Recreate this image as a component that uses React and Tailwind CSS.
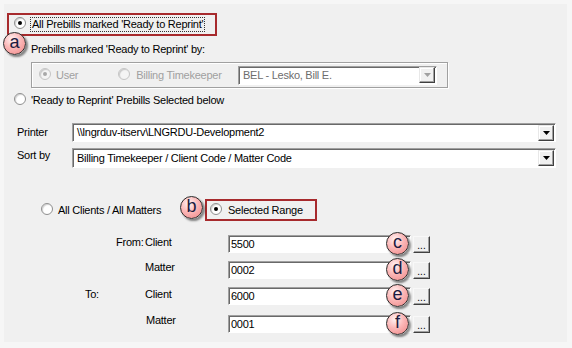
import React from 'react';

const Radio = ({ checked, disabled }) => (
  <span
    className={`relative inline-block shrink-0 w-[12px] h-[12px] rounded-full border ${
      disabled ? 'border-[#c4c4c4] bg-[#f4f4f4]' : 'border-[#8f8f8f] bg-white'
    } shadow-[inset_1px_1px_1px_rgba(0,0,0,0.18)]`}
  >
    {checked && (
      <span
        className={`absolute left-[3px] top-[3px] w-[4px] h-[4px] rounded-full ${
          disabled ? 'bg-[#a8a8a8]' : 'bg-black'
        }`}
      />
    )}
  </span>
);

const Badge = ({ letter, className }) => (
  <div
    className={`absolute w-[23px] h-[23px] rounded-full border-[1.5px] border-[#2a2a2a] bg-[radial-gradient(circle_at_38%_30%,#fff3f3_0%,#fbb7b7_45%,#ee8585_100%)] shadow-[2px_2px_2px_rgba(0,0,0,0.45)] flex items-center justify-center tracking-normal ${className}`}
  >
    <span className="text-[18px] leading-none text-[#1b1b40] font-['Liberation_Sans'] -mt-[3px]">{letter}</span>
  </div>
);

const DropButton = ({ disabled }) => (
  <div className="w-[16px] h-[16px] bg-[#f0f0f0] border border-t-[#e8e8e8] border-l-[#e8e8e8] border-b-[#404040] border-r-[#404040] shadow-[inset_-1px_-1px_0_#a0a0a0,inset_1px_1px_0_#fff] flex items-center justify-center">
    <svg width="7" height="4" viewBox="0 0 7 4">
      <path d="M0 0h7L3.5 4z" fill={disabled ? '#a0a0a0' : '#000'} />
    </svg>
  </div>
);

const Combo = ({ value, width, height, disabled }) => (
  <div
    className={`flex items-center justify-between bg-white border border-t-[#a0a0a0] border-l-[#a0a0a0] border-b-white border-r-white shadow-[inset_1px_1px_0_#696969] pl-[4px] pr-[1px] ${
      disabled ? 'text-[#6d6d6d]' : 'text-black'
    }`}
    style={{ width, height }}
  >
    <span className="whitespace-nowrap">{value}</span>
    <DropButton disabled={disabled} />
  </div>
);

const RangeRow = ({ label, value, badge, mt }) => (
  <div className={`flex items-center h-[18px] ${mt}`}>
    <div className="w-[221px] h-[18px] relative">{label}</div>
    <div className="relative w-[183px] h-[18px] bg-white border border-t-[#a0a0a0] border-l-[#a0a0a0] border-b-white border-r-white shadow-[inset_1px_1px_0_#696969] pl-[2px] flex items-center">
      {value}
      <Badge letter={badge} className="left-[157px] -top-[4px]" />
    </div>
    <div className="ml-[2px] w-[17px] h-[17px] bg-[#f0f0f0] border border-t-[#f8f8f8] border-l-[#f8f8f8] border-b-[#404040] border-r-[#404040] shadow-[inset_-1px_-1px_0_#a0a0a0] flex items-end justify-center pb-[1px] text-[10px] leading-none tracking-normal">
      ...
    </div>
  </div>
);

export default function App() {
  return (
    <div className="w-[572px] h-[348px] bg-[#f6f6f6] pt-[4px] pl-[4px] font-['Liberation_Sans',Arial,sans-serif] text-[11px] leading-[13px] tracking-[-0.25px] text-black">
      <div className="relative w-[563px] h-[338px] bg-[#f0f0f0] pt-[9px] pl-[3px]">
        {/* option a */}
        <div className="w-[210px] h-[23px] border-2 border-[#a72a2d] flex items-center">
          <div className="ml-[5px]">
            <Radio checked />
          </div>
          <span className="ml-[4px] border border-dotted border-[#333] px-[1px] whitespace-nowrap">
            All Prebills marked 'Ready to Reprint'
          </span>
        </div>
        <Badge letter="a" className="-left-[1px] top-[28px]" />

        <div className="ml-[24px] mt-[7px]">Prebills marked 'Ready to Reprint' by:</div>

        <div className="ml-[24px] mt-[6px] w-[417px] h-[26px] border border-[#a0a0a0] shadow-[1px_1px_0_#fff,inset_1px_1px_0_#fff] flex items-center text-[#a0a0a0]">
          <div className="ml-[7px]">
            <Radio checked disabled />
          </div>
          <span className="ml-[5px]">User</span>
          <div className="ml-[40px]">
            <Radio disabled />
          </div>
          <span className="ml-[6px]">Billing Timekeeper</span>
          <div className="ml-auto mr-[10px]">
            <Combo value="BEL - Lesko, Bill E." width={199} height={19} disabled />
          </div>
        </div>

        <div className="flex items-center mt-[5px]">
          <div className="ml-[7px]">
            <Radio />
          </div>
          <span className="ml-[5px]">'Ready to Reprint' Prebills Selected below</span>
        </div>

        {/* printer / sort */}
        <div className="flex items-center mt-[15px]">
          <span className="ml-[10px] w-[55px]">Printer</span>
          <Combo value={'\\\\lngrduv-itserv\\LNGRDU-Development2'} width={484} height={19} />
        </div>
        <div className="flex items-start mt-[6px]">
          <span className="ml-[10px] w-[55px] pt-[1px]">Sort by</span>
          <Combo value="Billing Timekeeper / Client Code / Matter Code" width={484} height={20} />
        </div>

        {/* range selection */}
        <div className="flex items-center mt-[31px] h-[22px]">
          <div className="ml-[34px]">
            <Radio />
          </div>
          <span className="ml-[5px] w-[102px] whitespace-nowrap">All Clients / All Matters</span>
          <div className="ml-[45px] w-[112px] h-[22px] border-2 border-[#a72a2d] flex items-center">
            <div className="ml-[3px]">
              <Radio checked />
            </div>
            <span className="ml-[6px]">Selected Range</span>
          </div>
        </div>
        <Badge letter="b" className="left-[176px] top-[192px]" />

        <RangeRow
          mt="mt-[14px]"
          label={
            <>
              <span className="absolute left-[109px] top-[1px]">From:</span>
              <span className="absolute left-[138px] top-[1px]">Client</span>
            </>
          }
          value="5500"
          badge="c"
        />
        <RangeRow
          mt="mt-[8px]"
          label={<span className="absolute left-[138px] top-[0px]">Matter</span>}
          value="0002"
          badge="d"
        />
        <RangeRow
          mt="mt-[8px]"
          label={
            <>
              <span className="absolute left-[78px] top-[1px]">To:</span>
              <span className="absolute left-[138px] top-[1px]">Client</span>
            </>
          }
          value="6000"
          badge="e"
        />
        <RangeRow
          mt="mt-[10px]"
          label={<span className="absolute left-[139px] -top-[1px]">Matter</span>}
          value="0001"
          badge="f"
        />
      </div>
    </div>
  );
}
